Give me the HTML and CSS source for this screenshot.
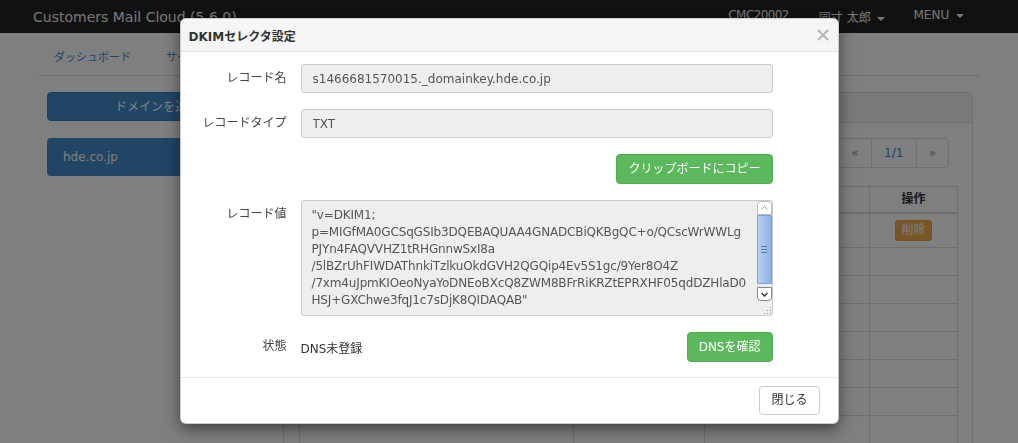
FILE: index.html
```html
<!DOCTYPE html>
<html lang="ja">

<head>
    <meta charset="UTF-8">
    <title>DKIMセレクタ設定 - Customers Mail Cloud</title>
    <link rel="stylesheet" href="styles.css">
</head>

<body>

    <div class="navbar">
        <div class="brand">Customers Mail Cloud (5.6.0)</div>
        <ul class="navbar-right">
            <li>CMC20002</li>
            <li>同寸 太郎 <span class="caret"></span></li>
            <li>MENU <span class="caret"></span></li>
        </ul>
    </div>

    <div class="container">
        <ul class="nav-tabs">
            <li><a href="#">ダッシュボード</a></li>
            <li class="active"><a href="#">サービス設定</a></li>
            <li><a href="#">レポート</a></li>
        </ul>

        <div class="row">
            <div class="sidebar">
                <button class="btn btn-primary btn-block">ドメインを追加</button>
                <div class="list-group">
                    <a href="#" class="list-group-item active">hde.co.jp</a>
                </div>
            </div>

            <div class="panel">
                <div class="panel-heading">DKIMセレクタ一覧</div>
                <div class="panel-body">
                    <ul class="pagination">
                        <li class="disabled">&laquo;</li>
                        <li class="current">1/1</li>
                        <li class="disabled">&raquo;</li>
                    </ul>
                    <table class="table">
                        <colgroup>
                            <col class="col-name">
                            <col class="col-type">
                            <col class="col-status">
                            <col class="col-op">
                        </colgroup>
                        <thead>
                            <tr>
                                <th>セレクタ</th>
                                <th>種別</th>
                                <th>状態</th>
                                <th>操作</th>
                            </tr>
                        </thead>
                        <tbody>
                            <tr>
                                <td>s1466681570015</td>
                                <td>TXT</td>
                                <td>DNS未登録</td>
                                <td class="op"><button class="btn-xs btn-warning">削除</button></td>
                            </tr>
                            <tr><td></td><td></td><td></td><td></td></tr>
                            <tr><td></td><td></td><td></td><td></td></tr>
                            <tr><td></td><td></td><td></td><td></td></tr>
                            <tr><td></td><td></td><td></td><td></td></tr>
                            <tr><td></td><td></td><td></td><td></td></tr>
                            <tr><td></td><td></td><td></td><td></td></tr>
                            <tr><td></td><td></td><td></td><td></td></tr>
                        </tbody>
                    </table>
                </div>
            </div>
        </div>
    </div>

    <!-- モーダル -->
    <div class="modal-backdrop"></div>
    <div class="modal">
        <div class="modal-dialog">
            <div class="modal-header">
                <h4 class="modal-title">DKIMセレクタ設定</h4>
                <button class="close" aria-label="閉じる">
                    <svg width="12" height="12" viewBox="0 0 12 12">
                        <path d="M1 1L11 11M11 1L1 11" stroke="#b8b8b8" stroke-width="2.2" />
                    </svg>
                </button>
            </div>
            <div class="modal-body">
                <div class="form-row">
                    <label>レコード名</label>
                    <input class="form-control" type="text" value="s1466681570015._domainkey.hde.co.jp" readonly>
                </div>
                <div class="form-row">
                    <label>レコードタイプ</label>
                    <input class="form-control" type="text" value="TXT" readonly>
                </div>
                <div class="form-row">
                    <span></span>
                    <div class="btn-line">
                        <button class="btn btn-success">クリップボードにコピー</button>
                    </div>
                </div>
                <div class="form-row">
                    <label>レコード値</label>
                    <div class="textarea-box">
                        <textarea class="record-value" readonly>"v=DKIM1;
p=MIGfMA0GCSqGSIb3DQEBAQUAA4GNADCBiQKBgQC+o/QCscWrWWLg
PJYn4FAQVVHZ1tRHGnnwSxI8a
/5lBZrUhFIWDAThnkiTzlkuOkdGVH2QGQip4Ev5S1gc/9Yer8O4Z
/7xm4uJpmKIOeoNyaYoDNEoBXcQ8ZWM8BFrRiKRZtEPRXHF05qdDZHlaD0
HSJ+GXChwe3fqJ1c7sDjK8QIDAQAB"</textarea>
                        <div class="scrollbar">
                            <span class="scroll-btn scroll-up">
                                <svg width="7" height="4" viewBox="0 0 7 4">
                                    <path d="M0.5 3.5L3.5 0.5L6.5 3.5" fill="none" stroke="#a0a0a0" />
                                </svg>
                            </span>
                            <span class="scroll-thumb">
                                <svg width="6" height="7" viewBox="0 0 6 7">
                                    <path d="M0 0.5H6M0 3.5H6M0 6.5H6" stroke="#5a7fb5" />
                                </svg>
                            </span>
                            <span class="scroll-btn scroll-down">
                                <svg width="7" height="5" viewBox="0 0 7 5">
                                    <path d="M0.5 1L3.5 4L6.5 1" fill="none" stroke="#333333" stroke-width="1.4" />
                                </svg>
                            </span>
                            <span class="resizer">
                                <svg width="10" height="10" viewBox="0 0 10 10" fill="#999999">
                                    <rect x="8" y="2" width="1" height="1" />
                                    <rect x="5" y="5" width="1" height="1" />
                                    <rect x="8" y="5" width="1" height="1" />
                                    <rect x="2" y="8" width="1" height="1" />
                                    <rect x="5" y="8" width="1" height="1" />
                                    <rect x="8" y="8" width="1" height="1" />
                                </svg>
                            </span>
                        </div>
                    </div>
                </div>
                <div class="form-row">
                    <label>状態</label>
                    <div class="btn-line status-line">
                        <span class="status-text">DNS未登録</span>
                        <button class="btn btn-success">DNSを確認</button>
                    </div>
                </div>
            </div>
            <div class="modal-footer">
                <button class="btn btn-default">閉じる</button>
            </div>
        </div>
    </div>

</body>

</html>
```

FILE: styles.css
```css
body {
    margin: 0;
    background-color: #FFFFFF;
    font-family: "DejaVu Sans", "Noto Sans CJK JP", sans-serif;
    font-size: 12px;
    color: #333333;
}

ul {
    margin: 0;
    padding: 0;
    list-style: none;
}

a {
    color: #428BCA;
    text-decoration: none;
}

button {
    font-family: inherit;
    font-size: 12px;
}

/* ナビゲーションバー */
.navbar {
    display: flex;
    justify-content: space-between;
    align-items: center;
    height: 33px;
    padding: 0 40px 0 33px;
    background-color: #222222;
    color: #EEEEEE;
}

.brand {
    font-size: 14px;
}

.navbar-right {
    display: flex;
}

.navbar-right li {
    padding: 0 14px;
}

.navbar-right li:first-child {
    padding-right: 16px;
    letter-spacing: -0.6px;
}

.caret {
    display: inline-block;
    margin-left: 3px;
    vertical-align: middle;
    border-top: 4px solid #EEEEEE;
    border-left: 4px solid transparent;
    border-right: 4px solid transparent;
}

/* 背景の画面 */
.container {
    width: 940px;
    margin: 7px auto 0;
}

.nav-tabs {
    display: flex;
    border-bottom: 1px solid #DDDDDD;
}

.nav-tabs a {
    display: block;
    padding: 10px 15px;
    margin-right: 5px;
    line-height: 15px;
    font-size: 11px;
}

.row {
    display: grid;
    grid-template-columns: 220px 690px;
    column-gap: 16px;
    padding-left: 8px;
    margin-top: 16px;
}

.btn {
    height: 30px;
    padding: 0 11px;
    border: 1px solid transparent;
    border-radius: 4px;
    line-height: 28px;
    cursor: pointer;
}

.btn-block {
    display: block;
    width: 100%;
    height: 29px;
}

.btn-primary {
    background-color: #428BCA;
    border-color: #357EBD;
    color: #FFFFFF;
}

.btn-success {
    background-color: #5CB85C;
    border-color: #4CAE4C;
    color: #FFFFFF;
}

.btn-default {
    background-color: #FFFFFF;
    border-color: #CCCCCC;
    color: #333333;
}

.list-group {
    margin-top: 17px;
}

.list-group-item {
    display: block;
    height: 38px;
    padding: 0 16px;
    line-height: 38px;
    border-radius: 4px;
}

.list-group-item.active {
    background-color: #428BCA;
    color: #FFFFFF;
}

.panel {
    border: 1px solid #DDDDDD;
    border-radius: 4px;
}

.panel-heading {
    padding: 7px 15px;
    line-height: 15px;
    background-color: #F5F5F5;
    border-bottom: 1px solid #DDDDDD;
    border-radius: 4px 4px 0 0;
}

.panel-body {
    padding: 15px;
}

.pagination {
    display: flex;
    justify-content: flex-end;
    margin-right: 8px;
}

.pagination li {
    height: 28px;
    padding: 0 12px;
    line-height: 28px;
    border: 1px solid #DDDDDD;
    margin-left: -1px;
}

.pagination li:first-child {
    border-radius: 4px 0 0 4px;
}

.pagination li:last-child {
    border-radius: 0 4px 4px 0;
}

.pagination .disabled {
    color: #999999;
}

.pagination .current {
    width: 20px;
    text-align: center;
    color: #428BCA;
}

.table {
    width: 658px;
    margin-top: 18px;
    border-collapse: collapse;
    table-layout: fixed;
}

.col-name {
    width: 274px;
}

.col-type {
    width: 131px;
}

.col-status {
    width: 165px;
}

.col-op {
    width: 88px;
}

.table th,
.table td {
    border: 1px solid #DDDDDD;
    padding: 6px 8px;
    height: 15px;
    line-height: 15px;
    text-align: center;
}

.table th {
    padding: 5px 8px;
    border-bottom-width: 2px;
}

.btn-xs {
    height: 21px;
    padding: 0 5px;
    border: 1px solid transparent;
    border-radius: 3px;
    line-height: 19px;
}

.btn-warning {
    background-color: #F0AD4E;
    border-color: #EEA236;
    color: #FFFFFF;
}

/* モーダル */
.modal-backdrop {
    position: fixed;
    top: 0;
    left: 0;
    right: 0;
    bottom: 0;
    background-color: #000000;
    opacity: 0.5;
}

.modal {
    position: fixed;
    top: 0;
    left: 0;
    right: 0;
    bottom: 0;
}

.modal-dialog {
    width: 657px;
    margin: 18px auto 0;
    background-color: #FFFFFF;
    border: 1px solid rgba(0, 0, 0, 0.2);
    border-radius: 6px;
    box-shadow: 0 5px 15px rgba(0, 0, 0, 0.5);
    overflow: hidden;
}

.modal-header {
    display: flex;
    justify-content: space-between;
    align-items: center;
    height: 32px;
    padding: 0 9px 0 8px;
    background-color: #F5F5F5;
    border-bottom: 1px solid #E5E5E5;
}

.modal-title {
    margin: 0;
    font-size: 12px;
    font-weight: bold;
    color: #333333;
}

.close {
    display: flex;
    padding: 0;
    border: 0;
    background: none;
    cursor: pointer;
}

.modal-body {
    display: flex;
    flex-direction: column;
    gap: 16px;
    padding: 12px 0 15px;
}

.form-row {
    display: grid;
    grid-template-columns: 106px 472px;
    column-gap: 14px;
}

.form-row label {
    line-height: 29px;
    text-align: right;
    color: #444444;
}

.form-control {
    box-sizing: border-box;
    width: 100%;
    height: 29px;
    padding: 0 11px;
    background-color: #EEEEEE;
    border: 1px solid #CCCCCC;
    border-radius: 3px;
    font-family: inherit;
    font-size: 12px;
    color: #555555;
}

.btn-line {
    display: flex;
    justify-content: flex-end;
    align-items: center;
}

.status-line {
    justify-content: space-between;
}

.status-text {
    color: #333333;
}

/* レコード値のテキストエリアとスクロールバー */
.textarea-box {
    display: flex;
    height: 116px;
    box-sizing: border-box;
    background-color: #EEEEEE;
    border: 1px solid #CCCCCC;
    border-radius: 3px;
}

.record-value {
    flex: 1;
    min-width: 0;
    margin: 0;
    padding: 6px 0 6px 10px;
    background: transparent;
    border: 0;
    outline: none;
    resize: none;
    overflow: hidden;
    white-space: pre;
    font-family: inherit;
    font-size: 12px;
    line-height: 17px;
    letter-spacing: -0.16px;
    color: #555555;
}

.scrollbar {
    display: flex;
    flex-direction: column;
    width: 15px;
}

.scroll-btn {
    display: flex;
    justify-content: center;
    align-items: center;
    box-sizing: border-box;
    height: 14px;
    background-color: #FFFFFF;
}

.scroll-up {
    border: 1px solid #BBBBBB;
    border-radius: 4px 4px 0 0;
}

.scroll-down {
    border: 1px solid #888888;
    border-radius: 0 0 4px 4px;
}

.scroll-thumb {
    display: flex;
    justify-content: center;
    align-items: center;
    box-sizing: border-box;
    height: 69px;
    margin-bottom: 3px;
    background: linear-gradient(to right, #B9D0F1, #8DB2E6);
    border: 1px solid #7BA2D8;
    border-radius: 1px;
}

.resizer {
    display: flex;
    justify-content: flex-end;
    align-items: flex-end;
    flex: 1;
}

.modal-footer {
    display: flex;
    justify-content: flex-end;
    padding: 8px 18px 8px;
    border-top: 1px solid #E5E5E5;
}

.modal-footer .btn {
    height: 29px;
    line-height: 27px;
}
```
